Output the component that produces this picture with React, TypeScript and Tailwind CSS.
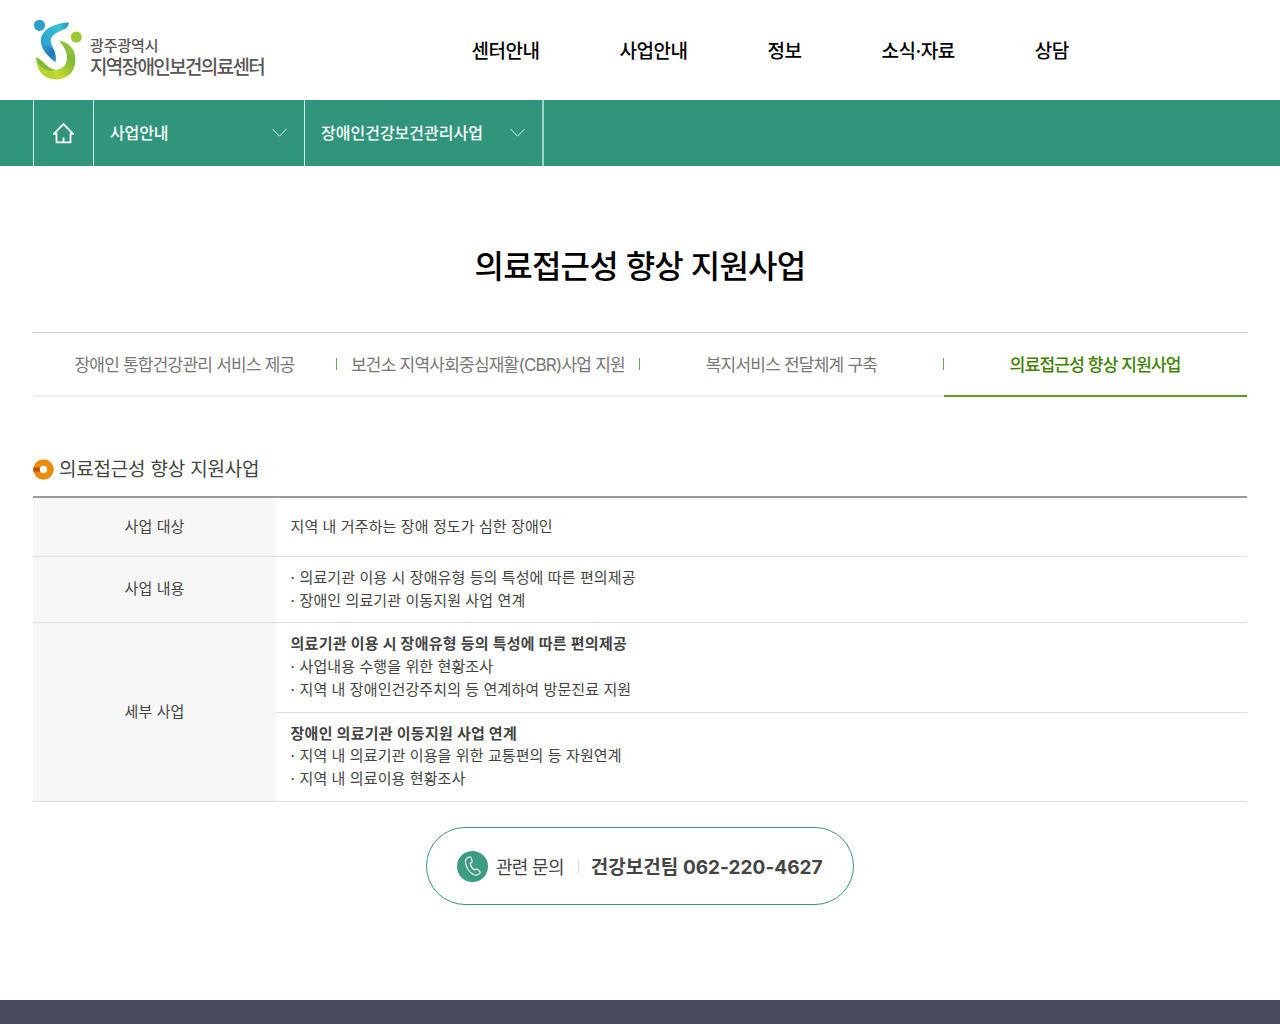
import { clsx } from 'clsx';

const nav = ['센터안내', '사업안내', '정보', '소식·자료', '상담'];

const tabs = [
  '장애인 통합건강관리 서비스 제공',
  '보건소 지역사회중심재활(CBR)사업 지원',
  '복지서비스 전달체계 구축',
  '의료접근성 향상 지원사업',
];

const details = [
  {
    title: '의료기관 이용 시 장애유형 등의 특성에 따른 편의제공',
    items: [
      '사업내용 수행을 위한 현황조사',
      '지역 내 장애인건강주치의 등 연계하여 방문진료 지원',
    ],
  },
  {
    title: '장애인 의료기관 이동지원 사업 연계',
    items: [
      '지역 내 의료기관 이용을 위한 교통편의 등 자원연계',
      '지역 내 의료이용 현황조사',
    ],
  },
];

const Logo = () => (
  <a href="#" className="flex w-[350px] shrink-0 text-[#5b5758]">
    <svg width="50" height="62" viewBox="0 0 50 62" className="mt-[19px]">
      <defs>
        <linearGradient id="blue" x1="0" y1="1" x2="1" y2="0">
          <stop offset="0" stopColor="#2a8fc6" />
          <stop offset="0.4" stopColor="#2fa9cf" />
          <stop offset="0.75" stopColor="#3cc3d6" />
          <stop offset="1" stopColor="#238dbd" />
        </linearGradient>
        <linearGradient id="fold" x1="0" y1="0" x2="1" y2="1">
          <stop offset="0" stopColor="#2fa0cd" />
          <stop offset="0.6" stopColor="#1f78b8" />
          <stop offset="1" stopColor="#2b93cb" />
        </linearGradient>
        <linearGradient id="green" x1="0" y1="1" x2="1" y2="0">
          <stop offset="0" stopColor="#a4cd35" />
          <stop offset="0.35" stopColor="#c3d82e" />
          <stop offset="0.7" stopColor="#7dbb3a" />
          <stop offset="1" stopColor="#a5cd39" />
        </linearGradient>
      </defs>
      <circle cx="6.500" cy="6.300" r="5.600" fill="#2d9fcb" />
      <circle cx="43.300" cy="18" r="5.500" fill="#9bc932" />
      <path
        d="M36 3.500C30 3.500 23 5 17.500 8C10 12 7 18 8 24C9 31 15 37 22.500 43C23 39 22.500 35 21 31C19 26 16.500 22.500 18.500 18.500C21 14.500 27 12 33 9.500C34.500 8.500 35.500 6 36 3.500Z"
        fill="url(#blue)"
      />
      <path
        d="M9 26.500C11 33 16 38 22.500 43C23 39 22.500 35 21 31C18 27.500 13 25 9 26.500Z"
        fill="url(#fold)"
      />
      <path
        d="M26 21.500C37 23.500 43 31 42.300 42C42 53 34 60.500 23 60.500C11 60.500 3.500 52 3 38.500C9 40 14 49 22 51C30 50.500 34.500 45 34 37.500C33.500 31 29.500 26 26 21.500Z"
        fill="url(#green)"
      />
      <path
        d="M3 38.500C9 40 13 49 22 51C18 53 13 52 9 48.500C5 45 3.500 42 3 38.500Z"
        fill="#7cbb3b"
      />
    </svg>
    <span className="mt-[35px] ml-[7px] flex flex-col font-medium">
      <span className="text-[15px] leading-[22px] tracking-[-0.1px]">
        광주광역시
      </span>
      <span className="text-[19px] leading-[22px] tracking-[-1.65px]">
        지역장애인보건의료센터
      </span>
    </span>
  </a>
);

const Chevron = () => (
  <svg width="16" height="10" viewBox="0 0 16 10" fill="none">
    <path d="M0.500 1L7.500 8.200L14.500 1" stroke="#d8f3ea" strokeWidth="1" />
  </svg>
);

const Breadcrumb = () => (
  <div className="flex h-[66px] bg-[#30957b] pl-[33px] text-base font-medium text-white">
    <a
      href="#"
      className="flex w-[61px] items-center justify-center border-x border-[#d3ede4]"
    >
      <svg
        width="21"
        height="22"
        viewBox="0.500 0 21 22"
        fill="none"
        stroke="#fff"
        strokeWidth="1.800"
      >
        <path d="M4 11.800H1.500L11 2L20.500 11.800H18V20.300H4Z" />
        <path d="M11 20V15.500" />
      </svg>
    </a>
    <button className="flex w-[211px] items-center justify-between border-r border-[#d3ede4] pr-4 pl-4">
      <span className="tracking-[-0.1px]">사업안내</span>
      <Chevron />
    </button>
    <button className="flex w-[239px] items-center justify-between border-r-2 border-[#a5d4c5] pr-4 pl-4">
      <span className="tracking-[0px]">장애인건강보건관리사업</span>
      <Chevron />
    </button>
  </div>
);

const Item = ({ children }: { children: string }) => (
  <p>
    <span className="inline-block w-[9px]">·</span>
    {children}
  </p>
);

const Label = ({
  children,
  className,
}: {
  children: string;
  className?: string;
}) => (
  <div
    className={clsx(
      'flex items-center justify-center border-b border-[#ddd] bg-[#f7f7f7]',
      className
    )}
  >
    {children}
  </div>
);

const InfoTable = () => (
  <div className="mt-[13px] grid grid-cols-[243px_1fr] border-t-2 border-[#999] text-[15px] leading-[22.7px] tracking-[0.1px] text-[#444]">
    <Label className="h-[59px]">사업 대상</Label>
    <div className="flex items-center border-b border-[#ddd] pl-[14.5px]">
      지역 내 거주하는 장애 정도가 심한 장애인
    </div>
    <Label>사업 내용</Label>
    <div className="border-b border-[#ddd] py-[10px] pl-[14.5px]">
      <Item>의료기관 이용 시 장애유형 등의 특성에 따른 편의제공</Item>
      <Item>장애인 의료기관 이동지원 사업 연계</Item>
    </div>
    <Label className="row-span-2">세부 사업</Label>
    {details.map(({ title, items }) => (
      <div
        key={title}
        className="border-b border-[#ddd] py-[10px] pl-[14.5px]"
      >
        <p className="font-bold tracking-[0.28px]">{title}</p>
        {items.map((item) => (
          <Item key={item}>{item}</Item>
        ))}
      </div>
    ))}
  </div>
);

const Contact = () => (
  <div className="mx-auto mt-[25px] flex h-[78px] w-[428px] items-center rounded-full border border-[#3d987f] pt-px pl-[30px] text-[#444]">
    <span className="flex size-[31px] items-center justify-center rounded-full bg-[#3d9b82]">
      <svg
        width="18"
        height="20"
        viewBox="0 0 18 20"
        fill="none"
        stroke="#fff"
        strokeWidth="1.100"
        strokeLinejoin="round"
      >
        <path d="M4.200 1.200C2.200 2.200 1.200 4 1.500 6.500C2.200 11.500 5.500 16.500 10 18.700C12.500 19.600 14.800 18.800 16 17C16.400 16.400 16.200 16 15.700 15.500L13.600 13.300C13.100 12.800 12.600 12.800 12 13.200L10.800 14.100C8.500 12.800 6.700 10 6.200 7.300L7.600 6.500C8.100 6.200 8.300 5.800 8.100 5.200L7.200 2C7 1.300 6.600 1 6 1Z" />
      </svg>
    </span>
    <span className="mt-[2px] ml-[8px] text-[18px] tracking-[-0.7px]">
      관련 문의
    </span>
    <span className="ml-[14px] h-[14px] w-px bg-[#ddd]" />
    <b className="mt-[4px] ml-[12px] text-[19px] tracking-[0.03px] whitespace-nowrap">
      건강보건팀 062-220-4627
    </b>
  </div>
);

export default function App() {
  return (
    <div className="flex h-screen flex-col overflow-hidden bg-white font-['Inter','Noto_Sans_CJK_KR',sans-serif]">
      <header className="flex h-[100px] shrink-0 pl-[33px]">
        <Logo />
        <nav className="ml-[88.5px] flex items-center gap-20 pt-[4px] text-[19px] font-medium tracking-[-0.48px] text-black">
          {nav.map((item) => (
            <a key={item} href="#" className="whitespace-nowrap">
              {item}
            </a>
          ))}
        </nav>
      </header>
      <Breadcrumb />
      <main className="flex-1 px-[33px]">
        <h1 className="mt-[76px] text-center text-[32px] leading-[50px] font-medium tracking-[-0.77px] text-black">
          의료접근성 향상 지원사업
        </h1>
        <ul className="mt-[40px] flex h-[65px] border-t border-[#ccc] text-[17px] tracking-[-0.78px]">
          {tabs.map((tab, i) => (
            <li
              key={tab}
              className={clsx(
                'flex w-1/4 items-center border-b-2',
                i === 3
                  ? 'border-[#5a9e1b] font-medium text-[#428000]'
                  : 'border-[#eee] text-[#777]'
              )}
            >
              <span className="flex-1 pt-[3px] text-center whitespace-nowrap">
                {tab}
              </span>
              {i < 3 && <i className="-mr-[0.4px] h-3 w-px bg-[#6bad5b]" />}
            </li>
          ))}
        </ul>
        <h2 className="mt-[58px] flex h-[28px] items-center gap-[5px] text-[19px] tracking-[-0.2px] text-[#444]">
          <svg width="21" height="21" viewBox="0 0 21 21">
            <circle cx="10.500" cy="10.500" r="10.200" fill="#eb8b0e" />
            <path d="M0.300 8.500H8V12.500H0.300Z" fill="#c74709" />
            <circle cx="10.500" cy="10.500" r="3.700" fill="#fff" />
          </svg>
          <span className="pt-[2px]">의료접근성 향상 지원사업</span>
        </h2>
        <InfoTable />
        <Contact />
      </main>
      <footer className="h-6 shrink-0 bg-[#4a4b5e]" />
    </div>
  );
}
